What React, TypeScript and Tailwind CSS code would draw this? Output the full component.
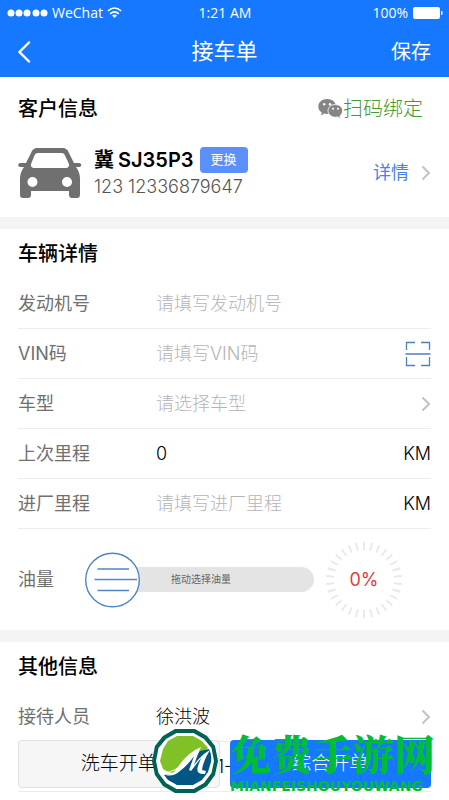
import { useState, type ReactNode } from 'react';

const FIELD = 'min-w-0 flex-1 bg-transparent text-lg font-light text-black outline-none placeholder:text-[#b4b4b8] placeholder:opacity-100';

const Chevron = () => (
    <svg width="10" height="16" viewBox="0 0 10 16" fill="none" stroke="#c2c2c4" strokeWidth="2" aria-hidden="true">
        <path d="M1.5 1.5 8 8l-6.5 6.5" />
    </svg>
);

const CarIcon = () => (
    <svg width="64" height="50" viewBox="0 0 64 50" aria-hidden="true" className="shrink-0">
        <path
            fill="#707070"
            fillRule="evenodd"
            d="M20 0h24c4 0 6 2 7 5l5 10h5c3 0 3 4 0 4h-3c3 4 4 8 4 12v15c0 3-1 4-3 4h-5c-2 0-3-1-3-3v-4H13v4c0 2-1 3-3 3H5c-2 0-3-1-3-3V31c0-4 1-8 4-12H2.500c-3 0-3-4 0-4H8l5-10c1-3 3-5 7-5Zm0 5c-2 0-3 1-3.500 2.500L13 16c-.5 2 .5 4 3 4h32c2.500 0 3.500-2 3-4L47 7.500C46.500 6 45.500 5 43.500 5ZM14.500 29a5 5 0 1 0 0 10 5 5 0 0 0 0-10Zm34.500 0a5 5 0 1 0 0 10 5 5 0 0 0 0-10Z"
        />
    </svg>
);

const WeChatIcon = () => (
    <svg width="25" height="20" viewBox="0 0 25 20" aria-hidden="true">
        <path fill="#858585" d="M9 0c5 0 9 3.200 9 7.300S14 15 9 15c-1 0-2-.1-2.800-.4L3 16.500l.7-3C1.500 12.200.3 10 .3 7.500.3 3.200 4 0 9 0Z" />
        <path fill="#858585" stroke="#fff" strokeWidth=".8" d="M17.300 5.500c4.200 0 7.300 2.800 7.300 6.300 0 2-1 3.800-2.600 5l.6 2.600-2.900-1.500c-.8.2-1.600.3-2.400.3-4.200 0-7.300-2.900-7.300-6.400s3.100-6.300 7.300-6.300Z" />
        <g fill="#fff">
            <circle cx="6.200" cy="5.300" r="1.200" />
            <circle cx="12" cy="5.300" r="1.200" />
            <circle cx="15" cy="9.800" r="1" />
            <circle cx="20" cy="9.800" r="1" />
        </g>
    </svg>
);

const ScanIcon = () => (
    <svg width="26" height="26" viewBox="0 0 26 26" fill="none" stroke="#4f7fc4" strokeWidth="1.300" aria-hidden="true">
        <path d="M1.500 9V1.500H10M16 1.500h8.500V9M1.500 16v8.500H10M16 24.500h8.500V16M.5 13h25" />
    </svg>
);

const Logo = () => (
    <svg width="66" height="66" viewBox="0 0 66 66" aria-hidden="true" className="shrink-0">
        <path fill="#006254" d="M23 1h20l12 7 8 10 3 15-3 14-8 11-12 7H23l-12-7-8-11-3-14 3-15L11 8Z" />
        <path fill="#fff" d="M24.500 5h17L52 11l7.500 9L62 33l-2.500 12L52 55l-10.500 6h-17L14 55 6.500 45 4 33l2.500-13L14 11Z" />
        <path fill="#80c127" d="M25 8h16l9 5 6 7-18 20-10 6-12-2-5-3-3-8 3-12 5-8Z" />
        <path fill="#005783" d="M57 21q3 6 2 13l-3 10-6 8-9 5H25l-9-5-4-5q11 0 20-8 8-10 16-16Z" />
        <path fill="#fff" d="M7 42q11 4 19-3 9-14 23-20-4 9-7 18 7-10 16-15-7 11-8 20l4 1-1 3q-10 1-7-8l3-8-10 13-2-1q3-8 5-14-6 9-14 15-7 6-14 4 7-1 10-5-9 4-17 0Z" />
    </svg>
);

const Gauge = ({ value }: { value: number }) => (
    <div className="relative flex size-20 shrink-0 items-center justify-center">
        <svg viewBox="0 0 80 80" className="absolute inset-0" aria-hidden="true">
            {Array.from({ length: 30 }, (_, i) => (
                <path key={i} d="M40 2v8" stroke="#e9e9e9" strokeWidth="2" transform={`rotate(${i * 12} 40 40)`} />
            ))}
        </svg>
        <output className="relative text-lg text-[#e03c38]">{value}%</output>
    </div>
);

const Row = ({ label, id, children }: { label: string; id: string; children: ReactNode }) => (
    <div className="flex h-[50px] items-center border-b border-[#ececec]">
        <label htmlFor={id} className="w-[138px] shrink-0 text-lg text-[#707070]">
            {label}
        </label>
        {children}
    </div>
);

const Heading = ({ children }: { children: ReactNode }) => (
    <h2 className="flex h-[50px] items-center text-xl font-medium text-black">{children}</h2>
);

const App = () => {
    const [fuel, setFuel] = useState(0);

    return (
        <div className="relative min-h-screen overflow-hidden bg-white font-['Inter','Noto_Sans_CJK_SC',sans-serif]">
            <header className="bg-[#1677ff] text-white">
                {/* Status bar */}
                <div className="grid h-[26px] grid-cols-3 items-center pr-1.5 pl-[7px] font-['Open_Sans',sans-serif] text-sm">
                    <div className="flex items-center gap-1">
                        <svg width="41" height="8" viewBox="0 0 41 8" fill="currentColor" aria-hidden="true">
                            {[4, 12, 20, 29, 37].map((x) => (
                                <circle key={x} cx={x} cy="4" r="3.500" />
                            ))}
                        </svg>
                        <span>WeChat</span>
                        <svg width="15" height="12" viewBox="0 0 15 12" fill="none" stroke="currentColor" strokeWidth="1.600" aria-hidden="true">
                            <path d="M.8 4q6.700-6 13.400 0M3.200 6.800q4.300-4 8.600 0" />
                            <path d="M5 8.500q2.500-2 5 0L7.500 11Z" fill="currentColor" stroke="none" />
                        </svg>
                    </div>
                    <span className="text-center">1:21 AM</span>
                    <div className="flex items-center justify-end gap-1">
                        <span>100%</span>
                        <svg width="31" height="12" viewBox="0 0 31 12" fill="currentColor" aria-hidden="true">
                            <rect x="1" width="27" height="12" rx="2" />
                            <rect x="29" y="4" width="1.500" height="4" rx=".7" />
                        </svg>
                    </div>
                </div>
                {/* Navigation */}
                <div className="grid h-[51px] grid-cols-3 items-center px-[18px]">
                    <button type="button" aria-label="返回" className="justify-self-start">
                        <svg width="13" height="22" viewBox="0 0 13 22" fill="none" stroke="currentColor" strokeWidth="2.400" strokeLinecap="round" aria-hidden="true">
                            <path d="M11 1.500 1.500 11l9.500 9.500" />
                        </svg>
                    </button>
                    <h1 className="text-center text-[22px]">接车单</h1>
                    <button type="button" className="justify-self-end text-xl">保存</button>
                </div>
            </header>

            {/* Customer */}
            <section className="px-[18px] pb-3">
                <div className="flex h-16 items-center justify-between pr-2">
                    <Heading>客户信息</Heading>
                    <button type="button" className="flex items-center text-xl font-light text-[#3f9a30]">
                        <WeChatIcon />
                        扫码绑定
                    </button>
                </div>
                <div className="flex h-16 items-center">
                    <CarIcon />
                    <div className="ml-3 flex-1">
                        <div className="flex items-center gap-1.5">
                            <span className="flex gap-1 text-xl font-semibold text-black">
                                <span>冀</span>
                                <span>SJ35P3</span>
                            </span>
                            <button type="button" className="h-[26px] rounded bg-[#5b8ff9] px-[11px] text-[13px] text-white">更换</button>
                        </div>
                        <p className="text-lg leading-[26px] font-light text-[#555]">123 12336879647</p>
                    </div>
                    <a href="#detail" className="flex items-center gap-3 text-lg text-[#4a80e8]">
                        详情
                        <Chevron />
                    </a>
                </div>
            </section>
            <div className="h-3 bg-[#f4f4f4]" />

            {/* Vehicle */}
            <section className="px-[18px]">
                <Heading>车辆详情</Heading>
                <Row label="发动机号" id="engine">
                    <input id="engine" placeholder="请填写发动机号" className={FIELD} />
                </Row>
                <Row label="VIN码" id="vin">
                    <input id="vin" placeholder="请填写VIN码" className={FIELD} />
                    <button type="button" aria-label="扫描">
                        <ScanIcon />
                    </button>
                </Row>
                <Row label="车型" id="model">
                    <input id="model" placeholder="请选择车型" readOnly className={FIELD} />
                    <Chevron />
                </Row>
                <Row label="上次里程" id="last">
                    <input id="last" defaultValue="0" className={FIELD} />
                    <span className="text-lg font-light text-black">KM</span>
                </Row>
                <Row label="进厂里程" id="current">
                    <input id="current" placeholder="请填写进厂里程" className={FIELD} />
                    <span className="text-lg font-light text-black">KM</span>
                </Row>
                <div className="flex h-[101px] items-center pr-[27px]">
                    <label htmlFor="fuel" className="w-[67px] shrink-0 text-lg text-[#707070]">油量</label>
                    <div className="relative mr-2.5 flex h-14 flex-1 items-center">
                        <div className="ml-7 flex h-[25px] flex-1 items-center rounded-r-full bg-[#e4e4e4] pl-[58px] text-[10px] text-[#666]">
                            拖动选择油量
                        </div>
                        <svg width="56" height="56" viewBox="0 0 56 56" className="absolute left-0" aria-hidden="true">
                            <circle cx="27.500" cy="28" r="26.800" fill="#fff" stroke="#4f86c6" strokeWidth="1.400" />
                            <path d="M12.500 17H44M9.500 27.500H52M12.500 38.500H44" stroke="#4f86c6" strokeWidth="1.600" />
                        </svg>
                        <input
                            id="fuel"
                            type="range"
                            value={fuel}
                            onChange={(e) => setFuel(Number(e.target.value))}
                            className="absolute inset-0 size-full opacity-0"
                        />
                    </div>
                    <Gauge value={fuel} />
                </div>
            </section>
            <div className="h-3 bg-[#f4f4f4]" />

            {/* Other */}
            <section className="px-[18px]">
                <Heading>其他信息</Heading>
                <Row label="接待人员" id="staff">
                    <input id="staff" defaultValue="徐洪波" className={FIELD} />
                    <Chevron />
                </Row>
                <div className="flex h-[50px] items-center justify-center border-b border-[#ececec] text-lg font-light text-black">
                    1-
                </div>
            </section>

            {/* Actions */}
            <div className="absolute inset-x-0 bottom-3 grid grid-cols-2 gap-2.5 px-[18px]">
                <button type="button" className="h-12 rounded border border-[#e2e2e2] bg-[#f6f6f6] text-[19px] font-light text-black">
                    洗车开单
                </button>
                <button type="button" className="h-12 rounded bg-[#1677ff] text-[19px] font-light text-white">
                    综合开单
                </button>
            </div>

            {/* Site mark */}
            <div className="pointer-events-none absolute right-3.5 bottom-1.5 flex items-center gap-3">
                <Logo />
                <div className="flex flex-col text-[#00bd36]">
                    <span className="font-['Noto_Serif_CJK_SC','Noto_Sans_CJK_SC',serif] text-[41px] leading-[50px] font-black">免费手游网</span>
                    <span className="font-['DejaVu_Sans',sans-serif] text-sm leading-4 font-bold">MIANFEISHOUYOUWANG</span>
                </div>
            </div>
        </div>
    );
};

export default App;
